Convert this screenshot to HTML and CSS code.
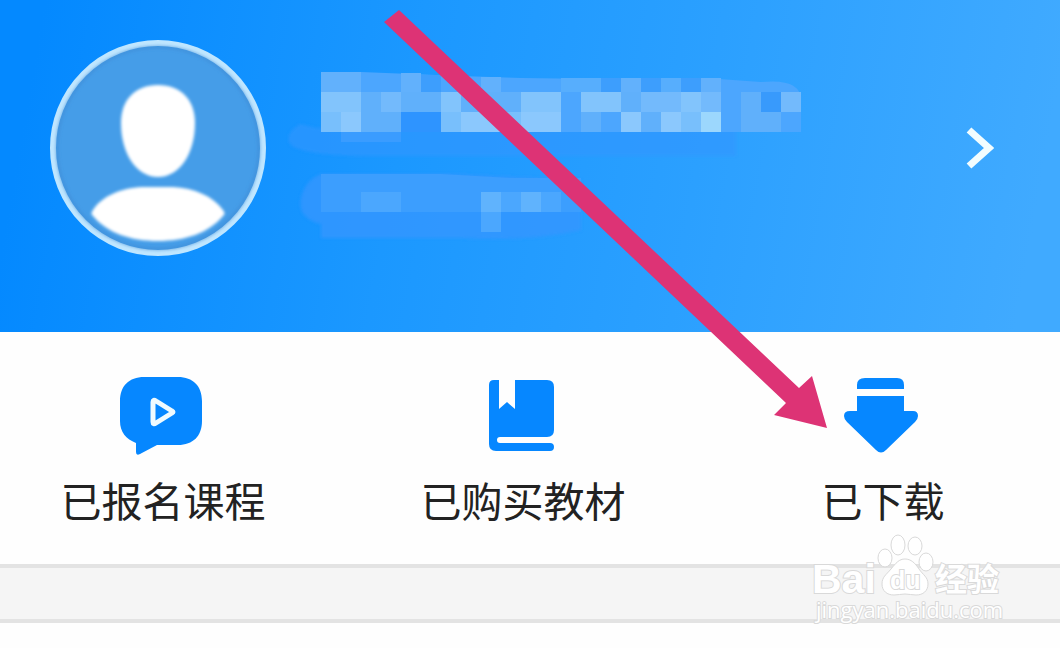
FILE: index.html
```html
<!DOCTYPE html>
<html lang="zh-CN">
<head>
  <meta charset="UTF-8">
  <meta name="viewport" content="width=device-width, initial-scale=1">
  <title>我的</title>
  <link rel="stylesheet" href="styles.css">
</head>
<body>
  <div class="page">
    <header class="profile">
      <svg class="avatar" viewBox="0 0 216 216" aria-hidden="true">
        <defs>
          <filter id="soft" x="-10%" y="-10%" width="120%" height="120%">
            <feGaussianBlur stdDeviation="1.5" />
          </filter>
        </defs>
        <circle cx="108" cy="108" r="105" fill="#459de8" stroke="#bfe6ff" stroke-width="6" />
        <circle cx="108" cy="108" r="101" fill="none" stroke="#3f8cd6" stroke-width="3" opacity="0.6" filter="url(#soft)" />
        <g fill="#fff" filter="url(#soft)">
          <path d="M108 45c23 0 37 15 37 38 0 30-15 54-37 54S71 113 71 83c0-23 14-38 37-38z" />
          <path d="M43 170c9-14 28-22 49-23h31c21 1 40 9 50 23 2 3 2 4 0 6-14 17-38 25-65 25s-51-8-65-25c-2-2-2-3 0-6z" />
        </g>
      </svg>

      <svg class="mosaic" viewBox="0 0 520 216" aria-hidden="true">
        <!-- smudge behind the name -->
        <g fill="#3296ff" filter="url(#soft)">
          <path d="M14 84q-16 10-10 20 12 12 80 12h366v-28H30z" opacity="0.6" />
          <path d="M35 134h130l130 6v50q-50 12-120 8H35v-14q-24-6-20-26 4-18 20-24z" opacity="0.8" />
        </g>
        <path fill="#4ca6fe" d="M35 32h40l100 4q90 4 180 2h64l56 4q40-4 40 18v32H35z" />
        <!-- first row -->
        <path fill="#62b1fc" d="M35 32h40v20H35zM115 33h20v19h-20zM195 37h20v15h-20zM335 38h20v14h-20zM415 38h20v14h-20z" />
        <path fill="#3d9efd" d="M135 35h20v17h-20zM315 38h20v14h-20zM355 38h20v14h-20zM395 38h20v14h-20z" />
        <path fill="#57aefd" d="M375 38h20v14h-20zM275 38h40v14h-40z" />
        <!-- second row -->
        <path fill="#82c4fc" d="M35 52h40v20H35zM155 52h20v20h-20zM235 52h40v20h-40zM295 52h40v20h-40zM395 52h20v20h-20z" />
        <path fill="#73bafc" d="M95 52h20v20H95zM355 52h40v20h-40zM415 52h20v20h-20zM495 52h20v20h-20z" />
        <path fill="#60b0fb" d="M75 52h20v20H75zM115 52h40v20h-40zM175 52h60v20h-60zM335 52h20v20h-20zM455 52h20v20h-20z" />
        <path fill="#389afc" d="M475 52h20v20h-20z" />
        <!-- third row -->
        <path fill="#8bc8fd" d="M55 72h20v20H55zM175 72h40v20h-40zM235 72h40v20h-40zM335 72h20v20h-20zM375 72h20v20h-20z" />
        <path fill="#78bffc" d="M35 72h20v20H35zM155 72h20v20h-20zM215 72h20v20h-20zM395 72h20v20h-20z" />
        <path fill="#9cd7fd" d="M415 72h20v20h-20z" />
        <path fill="#60b0fb" d="M75 72h40v20H75zM295 72h20v20h-20zM355 72h20v20h-20zM455 72h40v20h-40z" />
        <path fill="#2e94ff" d="M115 72h40v20h-40z" />
        <path fill="#3a9cff" d="M55 92h60v10H55z" />
        <!-- second line -->
        <path fill="#3c9efe" d="M35 134h120l70 4h70v34H35z" />
        <path fill="#4ba7fe" d="M75 152h40v20H75zM215 152h60v20h-60zM195 172h20v20h-20z" />
        <path fill="#60b3fd" d="M195 152h20v20h-20zM235 152h20v20h-20z" />
      </svg>

      <button class="more" type="button" aria-label="个人信息">
        <svg viewBox="0 0 28 42" aria-hidden="true">
          <path d="M3 3l20 18L3 39" fill="none" stroke="#f2fdff" stroke-width="7" />
        </svg>
      </button>
    </header>

    <nav class="menu">
      <a class="item" href="#">
        <svg viewBox="2 -1 82 78" aria-hidden="true">
          <path fill="#0687ff" d="M24 0h34c15 0 24 9 24 24v20c0 15-9 24-24 24H37L20 77q-4 2-4-2V66C6 62 0 55 0 44V24C0 9 9 0 24 0z" />
          <path fill="none" stroke="#f0fbff" stroke-width="5" stroke-linejoin="round" d="M33 25v20q0 3 3 1l16-10q2-1 0-2L36 24q-3-2-3 1z" />
        </svg>
        <span>已报名课程</span>
      </a>
      <a class="item" href="#">
        <svg viewBox="2 -1 82 78" aria-hidden="true">
          <path fill="#0687ff" d="M14 3h5v29l8-7 8 7V3h32q7 0 7 7v43q0 7-7 7H20q-3 0-3 3t3 3h50q4 0 4 4t-4 4H16q-7 0-7-7V8q0-5 5-5z" />
        </svg>
        <span>已购买教材</span>
      </a>
      <a class="item" href="#">
        <svg viewBox="0 -1 82 78" aria-hidden="true">
          <path fill="#0687ff" d="M23 1h32q7 0 7 7v4H15V8q0-7 8-7zM15 19h47v15h9q5 0 5 5 0 3-3 6L44 73q-5 5-10 0L5 45q-3-3-3-6 0-5 6-5h7z" />
        </svg>
        <span>已下载</span>
      </a>
    </nav>

    <div class="divider"></div>

    <svg class="arrow" viewBox="0 0 444 420" aria-hidden="true">
      <path fill="#dd3375" d="M15 0l400 378 13-12 15 52-53-13 12-12L0 12z" />
    </svg>

    <svg class="watermark" viewBox="0 0 200 100">
      <g fill="#fff" stroke="#d9d9d9" stroke-width="1">
        <ellipse cx="73" cy="33" rx="7" ry="9" />
        <ellipse cx="86" cy="20" rx="7" ry="10" />
        <ellipse cx="103" cy="21" rx="7" ry="9" />
        <ellipse cx="114" cy="37" rx="7" ry="9" />
        <path d="M93 34c6 0 10 4 14 10s9 8 9 15-5 11-12 11c-4 0-7-1-11-1s-7 1-11 1c-7 0-12-4-12-11s4-9 9-15 8-10 14-10z" />
      </g>
      <g class="outline">
        <text x="0" y="68" class="latin">Bai</text>
        <text x="78" y="64" class="du">du</text>
        <text x="123" y="66" class="han">经验</text>
        <text x="4" y="93" class="site">jingyan.baidu.com</text>
      </g>
    </svg>
  </div>
</body>
</html>
```

FILE: styles.css
```css
body {
  margin: 0;
  background: #fefefe;
  color: #222;
  font-family: "Noto Sans CJK SC", sans-serif;
}

.page {
  position: relative;
  min-height: 100vh;
  overflow: hidden;
}

.profile {
  display: flex;
  align-items: center;
  padding: 40px 66px 76px 50px;
  background: linear-gradient(100deg, #0489ff 4%, #1b98ff 38%, #2ba0ff 65%, #40aaff 96%);
}

.avatar {
  width: 216px;
  height: 216px;
  flex: none;
}

.mosaic {
  width: 520px;
  height: 216px;
  margin-left: 20px;
}

.more {
  margin-left: auto;
  padding: 0;
  border: none;
  background: none;
  cursor: pointer;
}

.more svg {
  display: block;
  width: 28px;
  height: 42px;
}

.menu {
  display: grid;
  grid-template-columns: repeat(3, 1fr);
  gap: 40px;
  padding: 44px 17px 35px 3px;
}

.item {
  display: flex;
  flex-direction: column;
  align-items: center;
  gap: 15px;
  color: #222;
  font-size: 41px;
  line-height: 60px;
  text-decoration: none;
  white-space: nowrap;
}

.item svg {
  width: 82px;
  height: 78px;
  overflow: visible;
}

.divider {
  height: 51px;
  border-top: 4px solid #e3e3e3;
  border-bottom: 4px solid #e3e3e3;
  background: #f5f5f5;
}

/* overlays */
.arrow {
  position: absolute;
  top: 10px;
  left: 384px;
  width: 444px;
  height: 420px;
  pointer-events: none;
}

.watermark {
  position: absolute;
  top: 525px;
  right: 48px;
  width: 200px;
  height: 100px;
  overflow: visible;
  pointer-events: none;
}

.outline {
  fill: #fff;
  stroke: #d9d9d9;
  stroke-width: 2px;
  paint-order: stroke;
}

.latin {
  font: bold 41px "Liberation Sans", sans-serif;
}

.du {
  font: bold 25px "Liberation Sans", sans-serif;
}

.han {
  font: bold 32px "Noto Sans CJK SC", sans-serif;
}

.site {
  font: 22px "Open Sans", sans-serif;
}
```
